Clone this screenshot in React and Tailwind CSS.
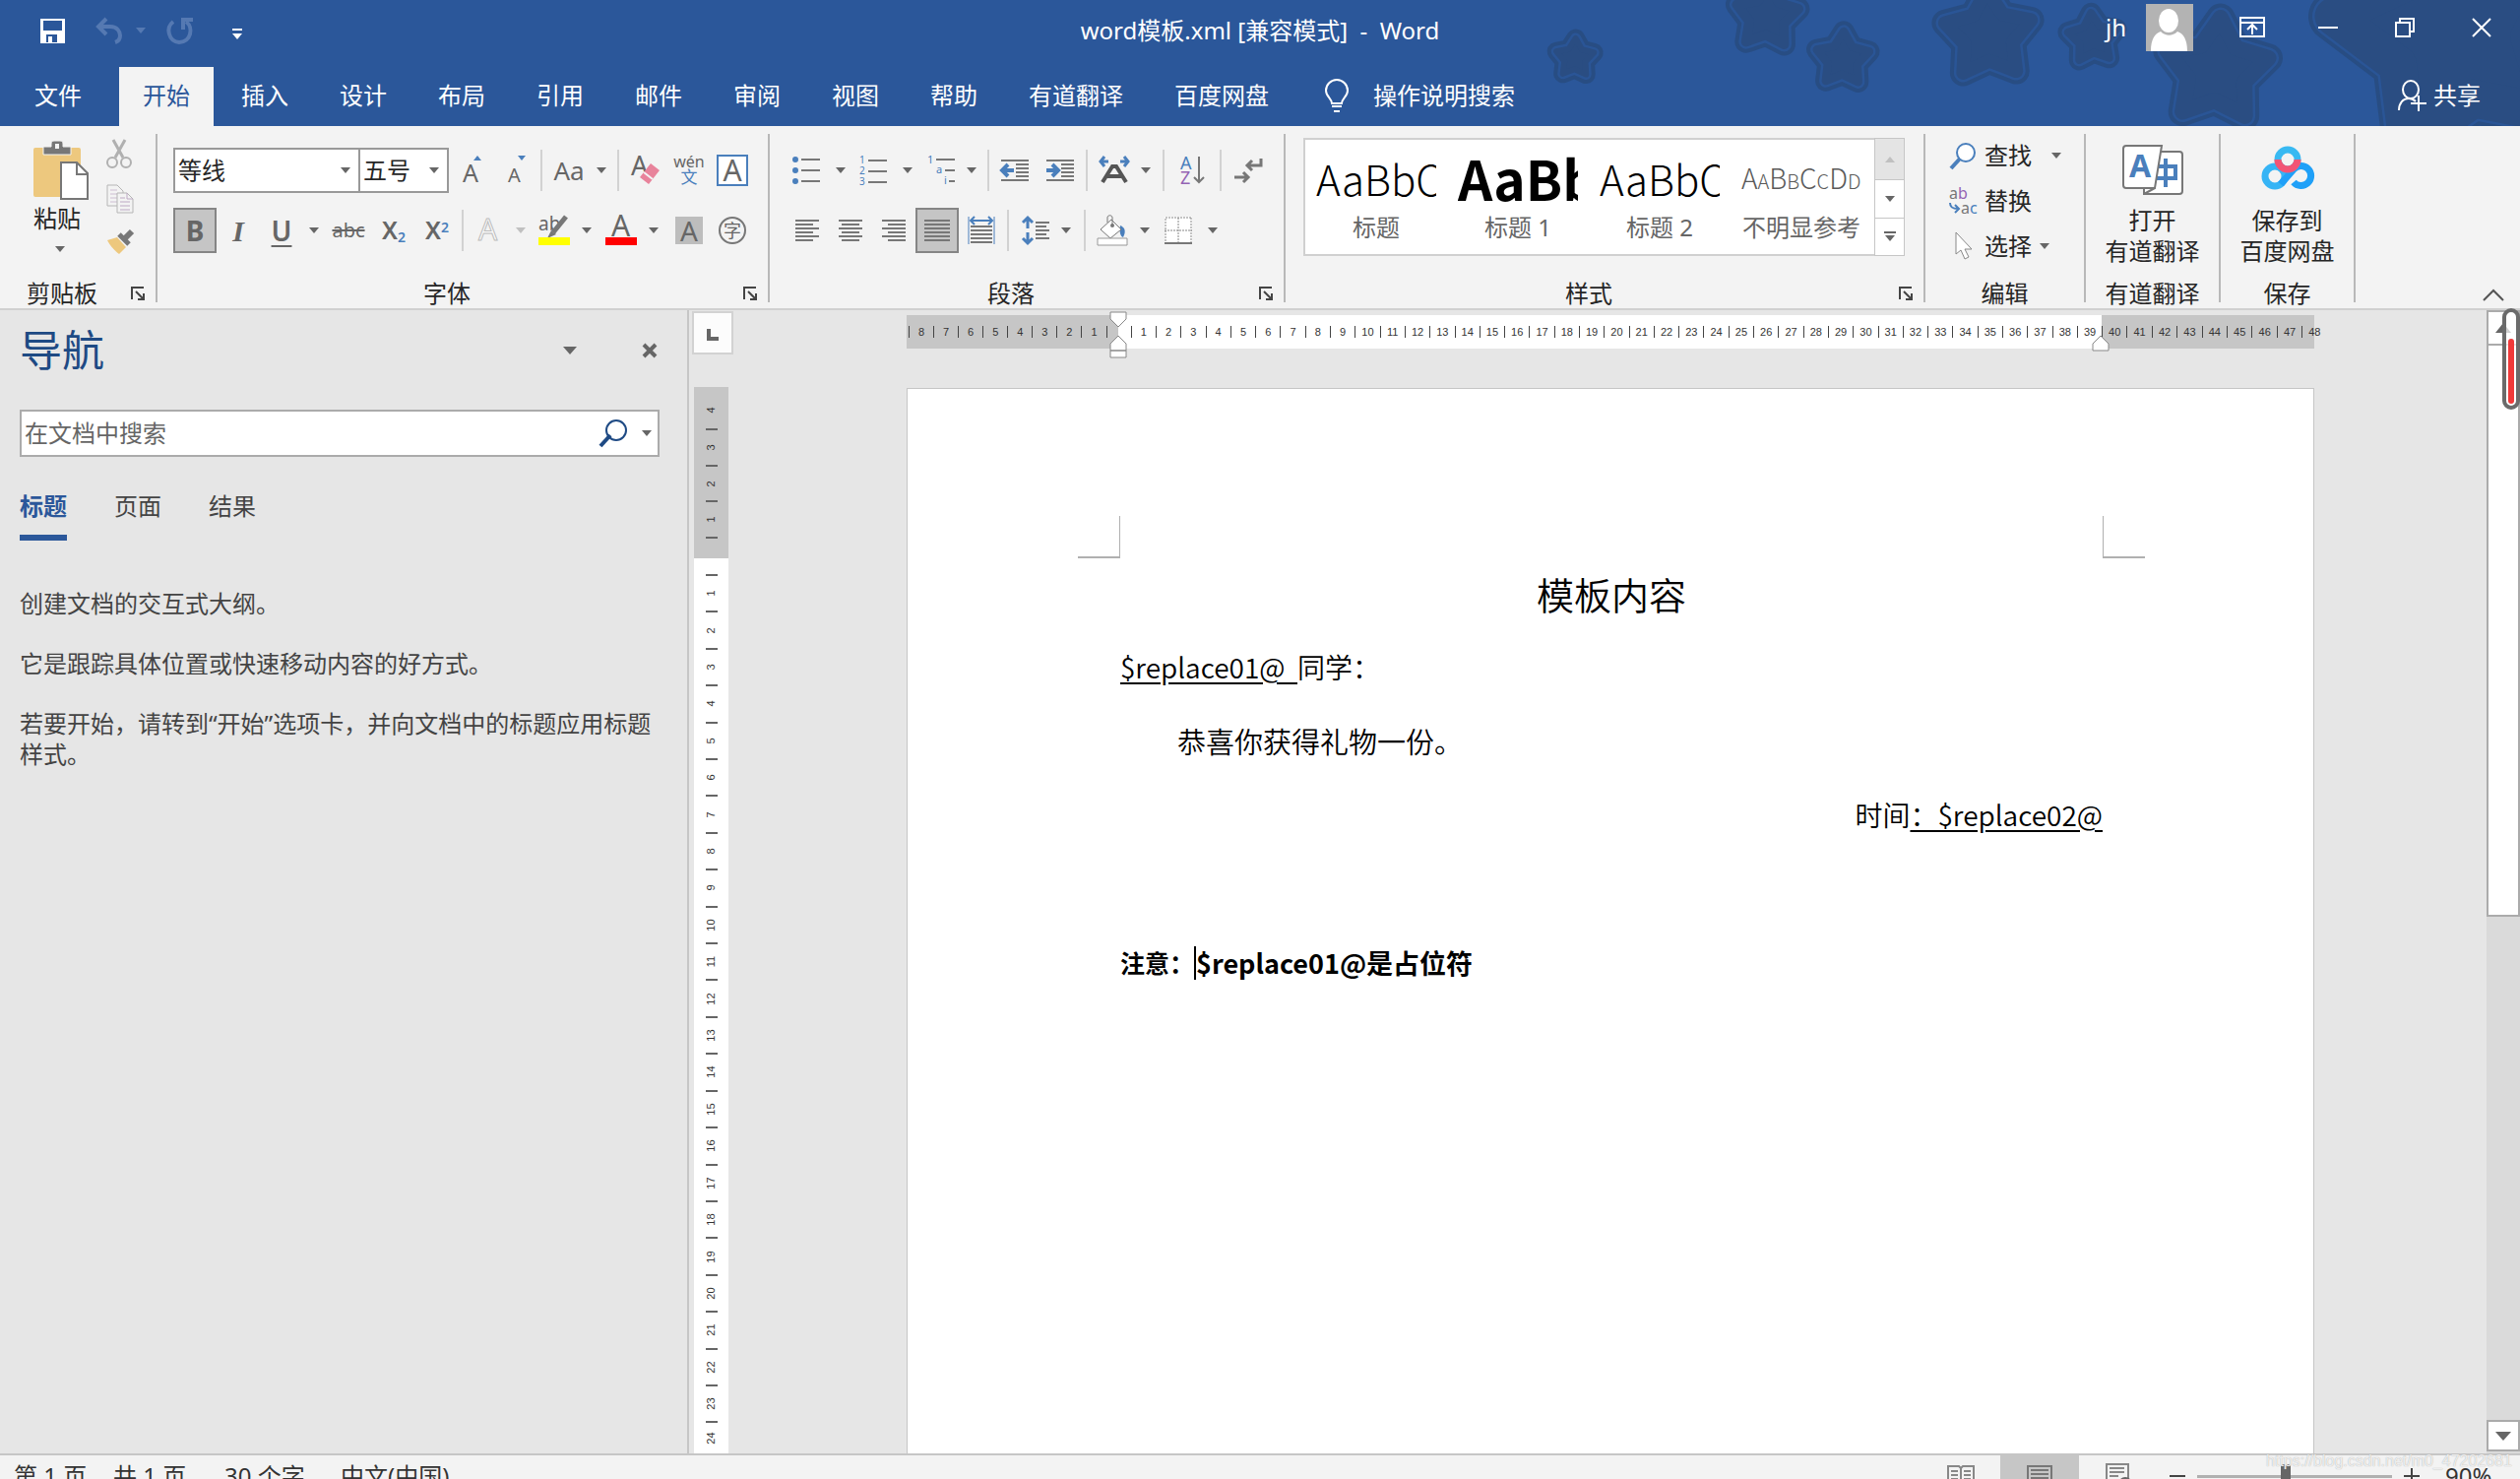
import React, { useState } from 'react';
import clsx from 'clsx';

const TABS = ['文件', '开始', '插入', '设计', '布局', '引用', '邮件', '审阅', '视图', '帮助', '有道翻译', '百度网盘'];

const STARS = [
  { cx: 40, cy: 59, r: 20, turn: 2 },
  { cx: 235, cy: 17, r: 33, turn: 4 },
  { cx: 312, cy: 60, r: 28, turn: 2 },
  { cx: 460, cy: 36, r: 46, turn: -2 },
  { cx: 566, cy: 39, r: 26, turn: -4 },
  { cx: 692, cy: 72, r: 54, turn: 4 },
  { cx: 938, cy: 30, r: 128, turn: -12 },
];

const range = (from, to) => Array.from({ length: to - from + 1 }, (_, i) => from + i);

const starPoints = ({ cx, cy, r, turn }) =>
  range(0, 9)
    .map((i) => {
      const radius = i % 2 ? r * 0.56 : r;
      const angle = ((i * 36 - 90 + turn) * Math.PI) / 180;
      return `${(cx + radius * Math.cos(angle)).toFixed(1)},${(cy + radius * Math.sin(angle)).toFixed(1)}`;
    })
    .join(' ');

const Stars = () => (
  <svg className="absolute right-0 top-0" width="1000" height="128" viewBox="0 0 1000 128" strokeLinejoin="round">
    {STARS.map((star) => (
      <g key={star.cx}>
        <polygon points={starPoints(star)} fill="#284d83" stroke="#284d83" strokeWidth={star.r * 0.3 + 13} />
        <polygon points={starPoints(star)} fill="#2b579a" stroke="#2a5596" strokeWidth={star.r * 0.3 + 5} />
        <polygon points={starPoints(star)} fill="#2a4d82" stroke="#2a4d82" strokeWidth={star.r * 0.3} />
      </g>
    ))}
  </svg>
);

const Caret = ({ className }) => (
  <svg className={clsx('shrink-0', className)} width="10" height="6" viewBox="0 0 10 6">
    <path d="M0 0h10L5 6z" fill="currentColor" />
  </svg>
);

const Sep = () => <span className="mx-[3px] h-[42px] w-[2px] shrink-0 bg-[#d2d2d2]" />;

const Tool = ({ label, className, active, caret, children }) => (
  <button
    type="button"
    aria-label={label}
    className={clsx(
      'flex h-[46px] shrink-0 items-center justify-center gap-3 text-[#666]',
      active && 'border-2 border-[#858585] bg-[#c5c5c5]',
      className
    )}
  >
    {children}
    {caret && <Caret />}
  </button>
);

const Lines = ({ rows, color = '#777' }) => (
  <g stroke={color} strokeWidth="2">
    {rows.map(([x1, x2, y]) => (
      <path key={`${x1}-${y}`} d={`M${x1} ${y}H${x2}`} />
    ))}
  </g>
);

const Icon = ({ w = 28, h = 28, children }) => (
  <svg className="shrink-0 overflow-visible" width={w} height={h} viewBox={`0 0 ${w} ${h}`} fill="none">
    {children}
  </svg>
);

const Group = ({ label, launcher, className, children }) => (
  <section className={clsx('flex shrink-0 flex-col border-r-2 border-[#b8b8b8]', className)}>
    <div className="flex-1">{children}</div>
    <div className="flex h-[18px] items-center">
      <h2 className="flex-1 text-center text-2xl leading-5">{label}</h2>
      {launcher && (
        <button type="button" aria-label={`${label}设置`} className="mr-1 flex w-7 justify-center">
          <Icon w={16} h={16}>
            <path d="M2 14V2h12M6 6l8 8M14 8v6H8" stroke="#444" strokeWidth="2" />
          </Icon>
        </button>
      )}
    </div>
  </section>
);

const ComboBox = ({ label, value, className }) => (
  <label className={clsx('relative flex h-[46px] shrink-0 items-center border-2 border-[#999] bg-white', className)}>
    <select aria-label={label} defaultValue={value} className="h-full w-full appearance-none pl-[3px] text-2xl text-[#262626] outline-none">
      <option>{value}</option>
    </select>
    <Caret className="pointer-events-none absolute right-2 text-[#666]" />
  </label>
);

const TitleBar = () => (
  <div className="relative grid h-[68px] grid-cols-[1fr_auto_1fr] items-center pb-[6px] text-2xl">
    <div className="flex items-center pl-[38px]">
      <button type="button" aria-label="保存">
        <Icon w={30} h={28}>
          <path d="M3 2h25v25H3z" fill="#fff" />
          <path d="M6 4h19v10H6zM9 18h11v8H9z" fill="#2b579a" />
          <path d="M11 20h4v6h-4z" fill="#fff" />
        </Icon>
      </button>
      <button type="button" aria-label="撤消" className="ml-7 flex items-center gap-3 text-[#5579b2]">
        <Icon w={30} h={28}>
          <path d="M12 2L4 10l8 8M5 10h11c7 0 10 5 10 9 0 3-2 6-5 7" stroke="#5579b2" strokeWidth="4" />
        </Icon>
        <Caret />
      </button>
      <button type="button" aria-label="重复" className="ml-5">
        <Icon w={30} h={30}>
          <path d="M8 6C0 12 3 26 14 27c12 0 15-15 7-21M18 14V4h10" stroke="#5579b2" strokeWidth="4" />
        </Icon>
      </button>
      <button type="button" aria-label="自定义快速访问工具栏" className="ml-[38px] pt-2">
        <Icon w={10} h={12}>
          <path d="M0 1h10" stroke="#fff" strokeWidth="2" />
          <path d="M0 5h10l-5 6z" fill="#fff" />
        </Icon>
      </button>
    </div>
    <h1 className="whitespace-pre">word模板.xml [兼容模式]  -  Word</h1>
    <div className="flex items-center justify-end pb-[6px]">
      <span className="mr-5">jh</span>
      <svg className="mr-[22px]" width="48" height="48" viewBox="0 0 48 48">
        <path d="M0 0h48v48H0z" fill="#b3b3b3" />
        <ellipse cx="23" cy="17" rx="10" ry="12" fill="#fff" />
        <path d="M5 48c0-12 4-18 10-20 5 5 12 5 17 0 6 2 10 8 10 20z" fill="#fff" />
      </svg>
      <button type="button" aria-label="功能区显示选项" className="flex w-[76px] justify-center">
        <Icon w={26} h={22}>
          <path d="M1 1h24v19H1zM1 6h24M13 18v-9M8 13l5-5 5 5" stroke="#fff" strokeWidth="2" />
        </Icon>
      </button>
      <button type="button" aria-label="最小化" className="flex w-[78px] justify-center">
        <Icon w={20} h={20}>
          <path d="M0 10h20" stroke="#fff" strokeWidth="2" />
        </Icon>
      </button>
      <button type="button" aria-label="还原" className="flex w-[78px] justify-center">
        <Icon w={20} h={20}>
          <path d="M1 5h14v14H1zM5 5V1h14v13h-4" stroke="#fff" strokeWidth="2" />
        </Icon>
      </button>
      <button type="button" aria-label="关闭" className="flex w-[78px] justify-center">
        <Icon w={20} h={20}>
          <path d="M1 1l18 18M19 1L1 19" stroke="#fff" strokeWidth="2" />
        </Icon>
      </button>
    </div>
  </div>
);

const TabBar = ({ current, onSelect }) => (
  <nav className="relative flex h-[60px] items-stretch pl-[11px] text-2xl">
    {TABS.map((tab, i) => (
      <button
        key={tab}
        type="button"
        onClick={() => onSelect(tab)}
        className={clsx('px-6 pb-[2px]', i === 0 ? 'mr-[14px]' : 'mr-1', tab === current && 'bg-[#f3f3f3] text-[#2b579a]')}
      >
        {tab}
      </button>
    ))}
    <button type="button" className="ml-7 flex items-center gap-6 pb-[2px]">
      <Icon w={26} h={34}>
        <path d="M8 25c0-5-6-7-6-13a11 11 0 0 1 22 0c0 6-6 8-6 13zM8 28h10M10 33h6" stroke="#fff" strokeWidth="2" />
      </Icon>
      操作说明搜索
    </button>
    <button type="button" className="ml-auto flex items-center gap-2 pb-[2px] pr-10">
      <Icon w={28} h={32}>
        <ellipse cx="13" cy="10" rx="8" ry="9" stroke="#fff" strokeWidth="2" />
        <path d="M1 31c0-7 4-12 10-12 3 0 5 1 7 3M21 16v16M13 24h16" stroke="#fff" strokeWidth="2" />
      </Icon>
      共享
    </button>
  </nav>
);

const ClipboardGroup = () => (
  <Group label="剪贴板" launcher className="w-[160px]">
    <div className="flex pl-[34px]">
      <button type="button" className="flex w-[56px] flex-col items-start pt-[6px] text-2xl leading-6">
        <Icon w={56} h={62}>
          <rect x="0" y="8" width="48" height="50" rx="2" fill="#edc87e" />
          <path d="M10 7h8V4c0-2 1-3 3-3h6c2 0 3 1 3 3v3h8v8H10z" fill="#777" stroke="#f3f3f3" strokeWidth="1" />
          <path d="M22 4h4v5h-4z" fill="#f3f3f3" />
          <path d="M28 23h16l11 11v26H28z" fill="#fff" stroke="#777" strokeWidth="2" />
          <path d="M44 24v11h11" stroke="#777" strokeWidth="2" />
        </Icon>
        <span className="mt-[6px]">粘贴</span>
        <Caret className="ml-[22px] mt-4 text-[#666]" />
      </button>
      <div className="flex flex-col items-center gap-4 pl-[18px] pt-[5px]">
        <button type="button" aria-label="剪切">
          <Icon w={28} h={30}>
            <path d="M7 1l10 18M19 1L9 19" stroke="#b0b0b0" strokeWidth="3" />
            <circle cx="6" cy="24" r="5" stroke="#b0b0b0" strokeWidth="2" />
            <circle cx="20" cy="24" r="5" stroke="#b0b0b0" strokeWidth="2" />
          </Icon>
        </button>
        <button type="button" aria-label="复制">
          <Icon w={28} h={30}>
            <path d="M1 1h10l6 6v15H1z" fill="#f3f3f3" stroke="#b5b5b5" strokeWidth="1" />
            <g strokeOpacity="0.7">
              <path d="M4 6h7M4 10h9M4 14h7M4 18h7" stroke="#bda9c4" strokeWidth="1" />
            </g>
            <path d="M11 9h10l6 6v14H11z" fill="#f3f3f3" stroke="#b5b5b5" strokeWidth="1" />
            <path d="M21 9v6h6M14 14h5M14 18h10M14 22h10M14 26h10" stroke="#bda9c4" strokeWidth="1" />
          </Icon>
        </button>
        <button type="button" aria-label="格式刷">
          <Icon w={28} h={26}>
            <path d="M1 11l10-3 9 10-7 7C9 22 4 17 1 11z" fill="#edc87e" />
            <path d="M13 5l10 10" stroke="#777" strokeWidth="5" />
            <path d="M18 10l8-8" stroke="#777" strokeWidth="6" />
          </Icon>
        </button>
      </div>
    </div>
  </Group>
);

const FontGroup = () => (
  <Group label="字体" launcher className="w-[622px]">
    <div className="flex flex-col gap-[15px] pl-4 pt-[14px]">
      <div className="flex items-center">
        <ComboBox label="字体" value="等线" className="w-[190px]" />
        <ComboBox label="字号" value="五号" className="-ml-[2px] w-[92px]" />
        <Tool label="增大字号" className="w-[46px]">
          <Icon w={24} h={30}>
            <text x="3" y="27" fontSize="25" fill="#666">A</text>
            <path d="M14 5h8l-4-5z" fill="#4a7fbc" />
          </Icon>
        </Tool>
        <Tool label="减小字号" className="w-11">
          <Icon w={24} h={30}>
            <text x="4" y="27" fontSize="20" fill="#666">A</text>
            <path d="M14 0h8l-4 5z" fill="#4a7fbc" />
          </Icon>
        </Tool>
        <Sep />
        <Tool label="更改大小写" caret className="w-[70px] gap-2 text-[26px]">Aa</Tool>
        <Sep />
        <Tool label="清除所有格式" className="w-12">
          <Icon w={32} h={32}>
            <text x="1" y="21" fontSize="27" fill="#666">A</text>
            <path d="M21 9l9 7-11 14-9-7z" fill="#e8839b" />
            <path d="M14 18l9 7" stroke="#f3f3f3" strokeWidth="2" />
          </Icon>
        </Tool>
        <Tool label="拼音指南" className="w-10">
          <Icon w={28} h={30}>
            <text x="14" y="12" fontSize="16" textAnchor="middle" fill="#666">wén</text>
            <text x="14" y="28" fontSize="17" textAnchor="middle" fill="#4a7fbc">文</text>
          </Icon>
        </Tool>
        <Tool label="字符边框" className="w-12">
          <span className="flex h-8 w-8 items-center justify-center border-2 border-[#4a7fbc] bg-white text-[30px] leading-7">A</span>
        </Tool>
      </div>
      <div className="flex items-center text-[28px]">
        <Tool label="加粗" active className="w-11 font-bold">B</Tool>
        <Tool label="倾斜" className="w-11 font-['Liberation_Serif'] text-[30px] font-bold italic">I</Tool>
        <Tool label="下划线" caret className="w-[66px]">
          <span className="w-8 text-center font-semibold underline decoration-2 underline-offset-4">U</span>
        </Tool>
        <Tool label="删除线" className="w-12 text-xl">
          <span className="line-through decoration-2">abc</span>
        </Tool>
        <Tool label="下标" className="w-11">
          <span className="text-[25px] font-semibold leading-6">X<sub className="text-sm text-[#4a7fbc]">2</sub></span>
        </Tool>
        <Tool label="上标" className="w-11">
          <span className="text-[25px] font-semibold leading-6">X<sup className="text-sm text-[#4a7fbc]">2</sup></span>
        </Tool>
        <Sep />
        <Tool label="文本效果" caret className="w-[66px] text-[#c0c0c0]">
          <Icon w={32} h={32}>
            <text x="6" y="26" fontSize="30" fill="#fafafa" stroke="#bdbdbd">A</text>
          </Icon>
        </Tool>
        <Tool label="突出显示" caret className="w-[68px]">
          <Icon w={32} h={32}>
            <text x="0" y="16" fontSize="19" fill="#666">ab</text>
            <path d="M28 2L15 18" stroke="#777" strokeWidth="5" />
            <path d="M13 16l5 4-9 4z" fill="#777" />
            <path d="M0 23h32v8H0z" fill="#ff0" />
          </Icon>
        </Tool>
        <Tool label="字体颜色" caret className="w-[68px]">
          <Icon w={32} h={32}>
            <text x="6" y="22" fontSize="30" fill="#666">A</text>
            <path d="M0 23h32v8H0z" fill="#f00" />
          </Icon>
        </Tool>
        <Tool label="字符底纹" className="w-12">
          <span className="flex h-7 w-7 items-center justify-center bg-[#bdbdbd] leading-7">A</span>
        </Tool>
        <Tool label="带圈字符" className="w-10">
          <span className="flex h-7 w-7 items-center justify-center rounded-full border-2 border-[#777] text-lg leading-5">字</span>
        </Tool>
      </div>
    </div>
  </Group>
);

const ParagraphGroup = () => (
  <Group label="段落" launcher className="w-[524px]">
    <div className="flex flex-col gap-[15px] pl-4 pt-[14px]">
      <div className="flex items-center">
        <Tool label="项目符号" caret className="w-[68px] gap-4">
          <Icon>
            <Lines rows={[[9, 28, 3], [9, 28, 14], [9, 28, 25]]} />
            <path d="M3 0a3 3 0 1 1 0 6 3 3 0 1 1 0-6zM3 11a3 3 0 1 1 0 6 3 3 0 1 1 0-6zM3 22a3 3 0 1 1 0 6 3 3 0 1 1 0-6z" fill="#4a7fbc" />
          </Icon>
        </Tool>
        <Tool label="编号" caret className="w-[68px] gap-4">
          <Icon>
            <Lines rows={[[9, 28, 4], [9, 28, 15], [9, 28, 26]]} />
            <g fontSize="10" fill="#4a7fbc">
              <text x="0" y="7">1</text>
              <text x="0" y="18">2</text>
              <text x="0" y="29">3</text>
            </g>
          </Icon>
        </Tool>
        <Tool label="多级列表" caret className="w-[66px]">
          <Icon>
            <Lines rows={[[9, 28, 3], [18, 28, 14], [22, 28, 25]]} />
            <g fontSize="11" fill="#4a7fbc">
              <text x="0" y="7">1</text>
              <text x="9" y="17">a</text>
              <text x="17" y="28">i</text>
            </g>
          </Icon>
        </Tool>
        <Sep />
        <Tool label="减少缩进量" className="w-[46px]">
          <Icon h={22}>
            <Lines rows={[[0, 28, 1], [15, 28, 5], [15, 28, 9], [15, 28, 13], [15, 28, 17], [0, 28, 21]]} />
            <path d="M7 5l-6 6 6 6M2 11h11" stroke="#4a7fbc" strokeWidth="4" />
          </Icon>
        </Tool>
        <Tool label="增加缩进量" className="w-[46px]">
          <Icon h={22}>
            <Lines rows={[[0, 28, 1], [15, 28, 5], [15, 28, 9], [15, 28, 13], [15, 28, 17], [0, 28, 21]]} />
            <path d="M6 5l6 6-6 6M0 11h11" stroke="#4a7fbc" strokeWidth="4" />
          </Icon>
        </Tool>
        <Sep />
        <Tool label="中文版式" caret className="w-[70px] gap-2">
          <Icon w={30}>
            <path d="M5 0L1 5l4 5M1 5h8M25 0l4 5-4 5M29 5h-8" stroke="#4a7fbc" strokeWidth="3" />
            <path d="M3 26L13 10h4l10 16M8 20h14" stroke="#555" strokeWidth="4" />
          </Icon>
        </Tool>
        <Sep />
        <Tool label="排序" className="w-[50px]">
          <Icon w={26} h={30}>
            <text x="1" y="14" fontSize="18" fill="#4a7fbc">A</text>
            <text x="1" y="29" fontSize="18" fill="#9464b4">Z</text>
            <path d="M20 1v26M15 22l5 5 5-5" stroke="#777" strokeWidth="2" />
          </Icon>
        </Tool>
        <Sep />
        <Tool label="显示编辑标记" className="w-12">
          <Icon>
            <path d="M27 2v7H13M18 4l-5 5 5 5M0 21h14M9 16l5 5-5 5" stroke="#777" strokeWidth="3" />
          </Icon>
        </Tool>
      </div>
      <div className="flex items-center">
        <Tool label="左对齐" className="w-11">
          <Icon w={24} h={22}>
            <Lines rows={[[0, 24, 1], [0, 18, 5], [0, 24, 9], [0, 18, 13], [0, 24, 17], [0, 18, 21]]} />
          </Icon>
        </Tool>
        <Tool label="居中" className="w-11">
          <Icon w={24} h={22}>
            <Lines rows={[[0, 24, 1], [3, 21, 5], [0, 24, 9], [3, 21, 13], [0, 24, 17], [3, 21, 21]]} />
          </Icon>
        </Tool>
        <Tool label="右对齐" className="w-11">
          <Icon w={24} h={22}>
            <Lines rows={[[0, 24, 1], [6, 24, 5], [0, 24, 9], [6, 24, 13], [0, 24, 17], [6, 24, 21]]} />
          </Icon>
        </Tool>
        <Tool label="两端对齐" active className="w-11">
          <Icon w={26} h={22}>
            <Lines rows={[[0, 26, 1], [0, 26, 5], [0, 26, 9], [0, 26, 13], [0, 26, 17], [0, 26, 21]]} />
          </Icon>
        </Tool>
        <Tool label="分散对齐" className="w-[46px]">
          <Icon>
            <path d="M1 0v28M27 0v28" stroke="#4a7fbc" strokeWidth="1" />
            <path d="M7 0L3 4l4 4M21 0l4 4-4 4M3 4h22" stroke="#4a7fbc" strokeWidth="2" />
            <Lines rows={[[3, 25, 10], [3, 25, 14], [3, 25, 18], [3, 25, 22], [3, 25, 26]]} />
          </Icon>
        </Tool>
        <Sep />
        <Tool label="行距" caret className="w-[70px]">
          <Icon>
            <path d="M1 6l5-5 5 5M6 2v10M1 22l5 5 5-5M6 26V16" stroke="#4a7fbc" strokeWidth="3" />
            <Lines rows={[[14, 28, 6], [14, 25, 10], [14, 28, 14], [14, 25, 18], [14, 28, 22]]} />
          </Icon>
        </Tool>
        <Sep />
        <Tool label="底纹" caret className="w-[70px]">
          <Icon w={32} h={32}>
            <path d="M24 11c5 2 6 6 3 12-3-1-4-5-3-12z" fill="#4a7fbc" />
            <path d="M15 5l10 10-11 9L4 15z" fill="#fff" stroke="#777" strokeWidth="1" />
            <path d="M11 8V3c0-3 5-3 5 0v7" stroke="#777" strokeWidth="1" />
            <circle cx="16" cy="11" r="2" fill="#777" />
            <path d="M1 24h30v7H1z" fill="#fff" stroke="#999" strokeWidth="1" />
          </Icon>
        </Tool>
        <Tool label="边框" caret className="w-[68px] gap-4">
          <Icon>
            <path d="M0 0h28v28H0z" fill="#fff" />
            <path d="M1 28V1h27M27 1v27M14 1v27M0 14h28" stroke="#888" strokeWidth="1" strokeDasharray="2 1" />
            <path d="M0 27h28" stroke="#777" strokeWidth="2" />
          </Icon>
        </Tool>
      </div>
    </div>
  </Group>
);

const STYLES = [
  { name: '标题', sample: 'AaBbC', look: 'text-[42px] font-light text-black' },
  { name: '标题 1', sample: 'AaBbC', look: 'text-[55px] font-bold text-black' },
  { name: '标题 2', sample: 'AaBbC', look: 'text-[42px] font-light text-black' },
  { name: '不明显参考', sample: 'AaBbCcDd', look: 'text-[28px] font-light [font-variant:small-caps] text-[#5a5a5a]' },
];

const StylesGroup = () => (
  <Group label="样式" launcher className="w-[650px]">
    <div className="ml-[18px] mt-1 flex h-[120px] w-[611px]">
      <div className="flex flex-1 border-2 border-r-0 border-[#d0d0d0] bg-white">
        {STYLES.map((s) => (
          <button key={s.name} type="button" className="flex w-36 shrink-0 flex-col items-center overflow-hidden px-[11px]">
            <span className={clsx("flex h-[77px] w-full items-center overflow-hidden font-['Noto_Sans_CJK_SC'] leading-[77px]", s.look)}>
              {s.sample}
            </span>
            <span className="whitespace-nowrap text-2xl leading-6 text-[#666]">{s.name}</span>
          </button>
        ))}
      </div>
      <div className="flex w-[31px] flex-col border border-[#c6c6c6] bg-white text-[#666]">
        <button type="button" aria-label="上一行" className="flex h-[42px] items-center justify-center border-b border-[#c6c6c6] bg-[#e4e4e4] text-[#c0c0c0]">
          <Caret className="rotate-180" />
        </button>
        <button type="button" aria-label="下一行" className="flex flex-1 items-center justify-center border-b border-[#c6c6c6]">
          <Caret />
        </button>
        <button type="button" aria-label="其他样式" className="flex flex-1 items-center justify-center">
          <Icon w={12} h={10}>
            <path d="M0 1h12" stroke="#666" strokeWidth="2" />
            <path d="M1 4h10l-5 6z" fill="#666" />
          </Icon>
        </button>
      </div>
    </div>
  </Group>
);

const EditGroup = () => (
  <Group label="编辑" className="w-[163px]">
    <div className="flex flex-col items-start pl-6 text-2xl leading-[42px]">
      <button type="button" className="flex h-11 items-center gap-2">
        <Icon>
          <path d="M2 27l10-11" stroke="#4a7fbc" strokeWidth="4" />
          <circle cx="17" cy="11" r="9" fill="#fff" stroke="#4a7fbc" strokeWidth="2" />
        </Icon>
        查找
        <Caret className="ml-3 text-[#666]" />
      </button>
      <button type="button" className="flex h-12 items-center gap-2">
        <Icon w={28} h={30}>
          <g fontSize="16">
            <text x="0" y="13" fill="#777">a<tspan fill="#9464b4">b</tspan></text>
            <text x="12" y="28" fill="#777">a<tspan fill="#4a7fbc">c</tspan></text>
          </g>
          <path d="M1 17c0 5 3 6 8 6M6 19l4 4-4 4" stroke="#4a7fbc" strokeWidth="2" />
        </Icon>
        替换
      </button>
      <button type="button" className="flex h-11 items-center gap-2">
        <Icon w={28} h={30}>
          <path d="M7 1v22l5-4 4 9 4-2-4-8h7z" fill="#fff" stroke="#888" strokeWidth="1" />
        </Icon>
        选择
        <Caret className="text-[#666]" />
      </button>
    </div>
  </Group>
);

const YoudaoGroup = () => (
  <Group label="有道翻译" className="w-[137px]">
    <button type="button" className="flex w-full flex-col items-center pt-[10px] text-2xl leading-[31px]">
      <Icon w={62} h={54}>
        <path d="M22 44l12-33V8h24c2 0 3 1 3 3v37c0 2-1 3-3 3H22z" fill="#fff" stroke="#777" strokeWidth="2" />
        <path d="M36 23h18v12H34M44 15v29" stroke="#4a7fbc" strokeWidth="4" />
        <path d="M4 2h36l-7 43H4c-2 0-3-1-3-3V5c0-2 1-3 3-3z" fill="#fff" stroke="#777" strokeWidth="2" />
        <path d="M33 45l-11 6" stroke="#777" strokeWidth="2" />
        <text x="7" y="34" fontSize="32" fontWeight="bold" fill="#4a7fbc">A</text>
      </Icon>
      <span className="mt-[8px]">打开</span>
      <span>有道翻译</span>
    </button>
  </Group>
);

const BaiduGroup = () => (
  <Group label="保存" className="w-[137px]">
    <button type="button" className="flex w-full flex-col items-center pt-[10px] text-2xl leading-[31px]">
      <Icon w={54} h={54}>
        <circle cx="14" cy="33" r="10" stroke="#36b4f5" strokeWidth="7" />
        <path d="M33 39a10 10 0 1 0 0-13L20 41" stroke="#1fa0f8" strokeWidth="7" />
        <circle cx="27" cy="16" r="10" stroke="#38b9f2" strokeWidth="7" />
        <path d="M17 16a10 10 0 0 0 20 0" stroke="#f25475" strokeWidth="7" />
      </Icon>
      <span className="mt-[8px]">保存到</span>
      <span>百度网盘</span>
    </button>
  </Group>
);

const Ribbon = () => (
  <div className="flex h-[187px] shrink-0 border-b-2 border-[#d0d0d0] bg-[#f3f3f3] pb-[6px] pt-2 text-[#262626]">
    <ClipboardGroup />
    <FontGroup />
    <ParagraphGroup />
    <StylesGroup />
    <EditGroup />
    <YoudaoGroup />
    <BaiduGroup />
    <button type="button" aria-label="折叠功能区" className="ml-auto mr-4 self-end">
      <Icon w={22} h={14}>
        <path d="M1 12L11 2l10 10" stroke="#555" strokeWidth="2" />
      </Icon>
    </button>
  </div>
);

const NavPane = () => {
  const [view, setView] = useState('标题');

  return (
    <aside className="w-[700px] shrink-0 border-r-2 border-[#c6c6c6] pl-5 pr-7 text-2xl text-[#444]">
      <div className="flex h-[82px] items-center">
        <h2 className="text-[43px] text-[#1e4a84]">导航</h2>
        <button type="button" aria-label="任务窗格选项" className="ml-auto text-[#666]">
          <svg width="14" height="8" viewBox="0 0 14 8"><path d="M0 0h14L7 8z" fill="currentColor" /></svg>
        </button>
        <button type="button" aria-label="关闭导航" className="ml-[66px] mr-[2px]">
          <Icon w={16} h={16}>
            <path d="M2 2l12 12M14 2L2 14" stroke="#666" strokeWidth="4" />
          </Icon>
        </button>
      </div>
      <div className="mt-[19px] flex h-12 items-center border-2 border-[#ababab] bg-white pr-[6px] text-[#666]">
        <input aria-label="在文档中搜索" placeholder="在文档中搜索" className="min-w-0 flex-1 pl-[3px] outline-none placeholder:text-[#666]" />
        <button type="button" aria-label="搜索">
          <Icon w={30} h={30}>
            <path d="M2 28l10-11" stroke="#1e4a84" strokeWidth="4" />
            <circle cx="18" cy="12" r="10" stroke="#1e4a84" strokeWidth="2" />
          </Icon>
        </button>
        <Caret className="ml-[14px]" />
      </div>
      <div className="mt-8 flex gap-12">
        {['标题', '页面', '结果'].map((name) => (
          <button
            key={name}
            type="button"
            onClick={() => setView(name)}
            className={clsx('h-[53px] border-b-[6px] pb-3', name === view ? 'border-[#2b579a] font-bold text-[#2b579a]' : 'border-transparent')}
          >
            {name}
          </button>
        ))}
      </div>
      <div className="mt-12 space-y-[30px] leading-[31px]">
        <p>创建文档的交互式大纲。</p>
        <p>它是跟踪具体位置或快速移动内容的好方式。</p>
        <p>若要开始，请转到“开始”选项卡，并向文档中的标题应用标题样式。</p>
      </div>
    </aside>
  );
};

const VMark = ({ n, className }) => (
  <div className={clsx('flex flex-col items-center', className)}>
    <span className="h-[2px] w-3 shrink-0 bg-[#666]" />
    <span className="flex flex-1 items-center">
      <span className="-rotate-90">{n}</span>
    </span>
  </div>
);

const VerticalRuler = () => (
  <div className="flex w-[46px] shrink-0 flex-col pl-[3px] pt-[1px] font-['Liberation_Sans'] text-[11px] leading-none text-[#333]">
    <button type="button" aria-label="制表符" className="flex h-[44px] w-[42px] shrink-0 items-center justify-center border-2 border-[#d2d2d2] bg-[#fcfcfc]">
      <Icon w={12} h={8}>
        <path d="M2 0v10h10" stroke="#666" strokeWidth="4" />
      </Icon>
    </button>
    <div className="ml-[2px] mt-[33px] flex h-[174px] w-[35px] shrink-0 flex-col bg-[#c6c6c6] pb-5 pt-1">
      <span className="flex h-[38px] items-center justify-center">
        <span className="-rotate-90">4</span>
      </span>
      {[3, 2, 1].map((n) => (
        <VMark key={n} n={n} className="flex-1" />
      ))}
      <span className="h-[2px] w-3 self-center bg-[#666]" />
    </div>
    <div className="ml-[2px] flex w-[35px] flex-1 flex-col bg-white">
      <span className="h-4" />
      {range(1, 24).map((n) => (
        <VMark key={n} n={n} className={n === 24 ? 'flex-7' : 'flex-8'} />
      ))}
    </div>
  </div>
);

const HMark = ({ n, half }) => (
  <span className={clsx('flex min-w-0 items-center', half ? 'flex-1' : 'flex-2')}>
    <span className="h-3 w-[1px] shrink-0 bg-[#444]" />
    <span className={half ? 'pl-[6px]' : 'flex flex-1 justify-center'}>{n}</span>
  </span>
);

const HorizontalRuler = () => (
  <div className="relative mx-auto mt-[5px] flex h-[34px] w-[1430px] font-['Liberation_Sans'] text-[11px] leading-none text-[#333]">
    <div className="flex w-[215px] bg-[#c6c6c6] pl-[2px]">
      {[8, 7, 6, 5, 4, 3, 2, 1].map((n) => (
        <HMark key={n} n={n} />
      ))}
      <HMark half />
    </div>
    <div className="flex flex-1 bg-white">
      <span className="flex-1" />
      {range(1, 39).map((n) => (
        <HMark key={n} n={n} />
      ))}
    </div>
    <div className="flex w-[216px] bg-[#c6c6c6]">
      {range(40, 47).map((n) => (
        <HMark key={n} n={n} />
      ))}
      <HMark n={48} half />
    </div>
    {/* indent markers */}
    <svg className="absolute -top-[4px] left-[206px]" width="18" height="48" viewBox="0 0 18 48" fill="#fff" stroke="#888">
      <path d="M1 1h16v7l-8 8-8-8zM1 40v-7l8-8 8 8v7zM1 40h16v7H1z" />
    </svg>
    <svg className="absolute right-[208px] top-[20px]" width="18" height="18" viewBox="0 0 18 18" fill="#fff" stroke="#888">
      <path d="M1 16V9l8-8 8 8v7z" />
    </svg>
  </div>
);

const Document = () => (
  <article className="relative mx-auto mt-10 w-[1430px] flex-1 border border-b-0 border-[#c6c6c6] bg-white pl-[216px] pr-[214px] pt-[170px] font-['Noto_Sans_CJK_SC'] text-[28px] font-[350] leading-[75px] text-black">
    <span className="absolute left-[173px] top-[129px] h-[43px] w-[43px] border-b-2 border-r border-[#b0b0b0]" />
    <span className="absolute right-[171px] top-[129px] h-[43px] w-[43px] border-b-2 border-l border-[#b0b0b0]" />
    <h1 className="text-center text-[38px]">模板内容</h1>
    <p>
      <u className="whitespace-pre underline-offset-4">$replace01@  </u>同学：
    </p>
    <p className="pl-[58px] text-[29px]">恭喜你获得礼物一份。</p>
    <p className="text-right">
      时间<u className="underline-offset-4">：$replace02@</u>
    </p>
    <p>&nbsp;</p>
    <p className="flex items-center text-[27px] font-bold">
      <span className="text-[25px]">注意：</span>
      <span className="h-[34px] w-[2px] bg-black" />
      $replace01@是占位符
    </p>
  </article>
);

const ScrollBar = () => (
  <div className="relative flex w-[34px] shrink-0 flex-col bg-[#dadada]">
    <button type="button" aria-label="向上滚动" className="flex h-9 items-center justify-center border-2 border-[#ababab] bg-white">
      <svg width="16" height="10" viewBox="0 0 16 10"><path d="M0 10h16L8 0z" fill="#666" /></svg>
    </button>
    <div className="h-[580px] border-2 border-t-0 border-[#ababab] bg-white" />
    <button type="button" aria-label="向下滚动" className="mb-[2px] mt-auto flex h-8 items-center justify-center border-2 border-[#ababab] bg-white">
      <svg width="16" height="9" viewBox="0 0 16 9"><path d="M0 0h16L8 9z" fill="#666" /></svg>
    </button>
    <div className="absolute -top-[2px] right-0 flex h-[103px] w-[18px] flex-col justify-end rounded-full border-4 border-[#6b6b6b] bg-white/70 p-[2px]">
      <span className="h-[66px] rounded-full bg-[#f03a3a]" />
    </div>
  </div>
);

const StatusBar = () => (
  <footer className="relative h-[26px] shrink-0 overflow-hidden border-t-2 border-[#c6c6c6] bg-[#f3f3f3] text-2xl text-[#333]">
    <div className="flex h-[42px] items-center pl-[14px]">
      <span className="w-[101px]">第 1 页</span>
      <span className="w-[113px]">共 1 页</span>
      <span className="w-[118px]">30 个字</span>
      <span>中文(中国)</span>
      <div className="ml-auto flex h-full items-center">
        <button type="button" aria-label="阅读视图" className="flex h-full w-20 items-center justify-center">
          <Icon w={28} h={26}>
            <path d="M1 3h11l2 2 2-2h11v20H1zM14 5v20" stroke="#888" strokeWidth="2" />
            <Lines color="#888" rows={[[4, 11, 8], [4, 11, 12], [4, 11, 16], [17, 24, 8], [17, 24, 12], [17, 24, 16]]} />
          </Icon>
        </button>
        <button type="button" aria-label="页面视图" className="flex h-full w-20 items-center justify-center bg-[#c6c6c6]">
          <Icon w={26} h={26}>
            <path d="M1 3h24v22H1z" stroke="#777" strokeWidth="2" />
            <Lines color="#777" rows={[[4, 22, 7], [4, 22, 11], [4, 22, 15], [4, 22, 19]]} />
          </Icon>
        </button>
        <button type="button" aria-label="Web 版式视图" className="flex h-full w-20 items-center justify-center">
          <Icon w={28} h={28}>
            <path d="M2 2h22v24H2z" stroke="#888" strokeWidth="2" />
            <Lines color="#888" rows={[[5, 20, 6], [5, 20, 10], [5, 14, 14]]} />
            <circle cx="21" cy="22" r="7" fill="#666" />
          </Icon>
        </button>
        <button type="button" aria-label="缩小" className="ml-3">
          <Icon w={16} h={20}><path d="M0 10h16" stroke="#444" strokeWidth="2" /></Icon>
        </button>
        <input
          type="range"
          aria-label="缩放"
          defaultValue="45"
          className="mx-3 h-6 w-[198px] appearance-none bg-[linear-gradient(#b0b0b0,#b0b0b0)] bg-[length:100%_3px] bg-center bg-no-repeat [&::-webkit-slider-thumb]:h-6 [&::-webkit-slider-thumb]:w-[10px] [&::-webkit-slider-thumb]:appearance-none [&::-webkit-slider-thumb]:bg-[#666]"
        />
        <button type="button" aria-label="放大">
          <Icon w={16} h={20}><path d="M0 10h16M8 2v16" stroke="#444" strokeWidth="2" /></Icon>
        </button>
        <span className="ml-[26px] w-[76px]">90%</span>
      </div>
    </div>
  </footer>
);

const App = () => {
  const [tab, setTab] = useState('开始');

  return (
    <div className="relative flex h-screen flex-col overflow-hidden bg-[#e6e6e6] font-['Noto_Sans','Noto_Sans_CJK_SC',sans-serif]">
      <header className="relative h-32 shrink-0 overflow-hidden bg-[#2b579a] text-white">
        <Stars />
        <TitleBar />
        <TabBar current={tab} onSelect={setTab} />
      </header>
      <Ribbon />
      <main className="flex min-h-0 flex-1">
        <NavPane />
        <VerticalRuler />
        <div className="flex min-w-0 flex-1 flex-col">
          <HorizontalRuler />
          <Document />
        </div>
        <ScrollBar />
      </main>
      <StatusBar />
      <span className="absolute bottom-2 right-2 font-['Liberation_Sans'] text-base leading-5 text-white/80 [text-shadow:0_0_1px_#999]">
        https://blog.csdn.net/m0_47202681
      </span>
    </div>
  );
};

export default App;
